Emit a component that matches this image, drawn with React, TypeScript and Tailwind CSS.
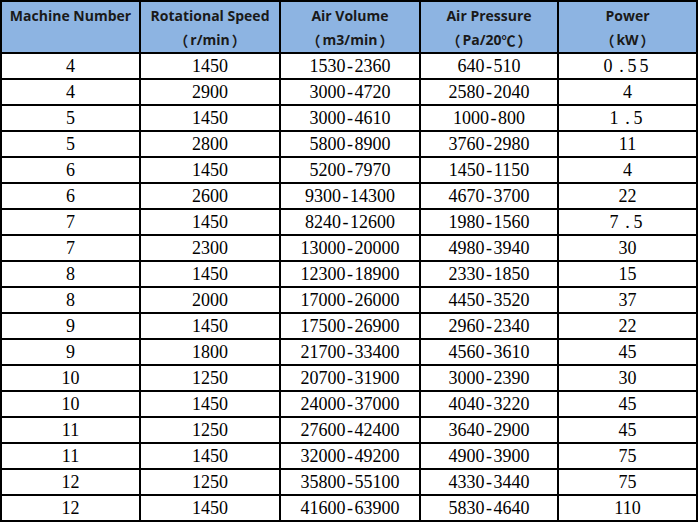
const headers: [string, string][] = [
  ['Machine Number', ''],
  ['Rotational Speed', 'r/min'],
  ['Air Volume', 'm3/min'],
  ['Air Pressure', 'Pa/20℃'],
  ['Power', 'kW'],
]

const rows: string[][] = [
  ['4', '1450', '1530-2360', '640-510', '0.55'],
  ['4', '2900', '3000-4720', '2580-2040', '4'],
  ['5', '1450', '3000-4610', '1000-800', '1.5'],
  ['5', '2800', '5800-8900', '3760-2980', '11'],
  ['6', '1450', '5200-7970', '1450-1150', '4'],
  ['6', '2600', '9300-14300', '4670-3700', '22'],
  ['7', '1450', '8240-12600', '1980-1560', '7.5'],
  ['7', '2300', '13000-20000', '4980-3940', '30'],
  ['8', '1450', '12300-18900', '2330-1850', '15'],
  ['8', '2000', '17000-26000', '4450-3520', '37'],
  ['9', '1450', '17500-26900', '2960-2340', '22'],
  ['9', '1800', '21700-33400', '4560-3610', '45'],
  ['10', '1250', '20700-31900', '3000-2390', '30'],
  ['10', '1450', '24000-37000', '4040-3220', '45'],
  ['11', '1250', '27600-42400', '3640-2900', '45'],
  ['11', '1450', '32000-49200', '4900-3900', '75'],
  ['12', '1250', '35800-55100', '4330-3440', '75'],
  ['12', '1450', '41600-63900', '5830-4640', '110'],
]

const cjk = "font-['Noto_Sans_CJK_SC',sans-serif] font-bold"

// punctuation in the source is rendered in a wide CJK face
function Num({ v }: { v: string }) {
  const dotted = v.includes('.')
  const parts = v.split(/([-.])/)
  return (
    <>
      {parts.map((p, i) =>
        p === '-' ? (
          <span key={i} className="inline-block w-[9px] text-center">
            -
          </span>
        ) : p === '.' ? (
          <span key={i} className="inline-block w-[12px] text-center">
            .
          </span>
        ) : (
          <span key={i} className={dotted ? 'tracking-[3px]' : ''}>
            {p}
          </span>
        ),
      )}
    </>
  )
}

// ℃ is a single CJK glyph in the source
function Unit({ u }: { u: string }) {
  const i = u.indexOf('℃')
  if (i < 0) return <>{u}</>
  return (
    <>
      {u.slice(0, i)}
      <span className="font-['Noto_Sans_CJK_SC',sans-serif] font-bold">℃</span>
    </>
  )
}

export default function App() {
  return (
    <div className="w-[699px] h-[523px] bg-white">
      <div className="w-[698px] border-l-2 border-t-2 border-b-2 border-r-2 border-black border-r-dotted">
        <div className="grid grid-cols-[137px_138px_138px_136px_137px] gap-[2px] bg-black">
          {headers.map(([a, b]) => (
            <div
              key={a}
              className="h-[50px] bg-[#8db4e2] flex flex-col items-center pt-[2px] text-[14px] leading-[24px] font-bold text-[#1a1a1a] font-['Open_Sans','Noto_Sans_CJK_SC',sans-serif]"
            >
              <span>{a}</span>
              {b && (
                <span className="flex items-center">
                  <span className={cjk + ' mr-[2px]'}>（</span>
                  <Unit u={b} />
                  <span className={cjk + ' ml-[2px]'}>）</span>
                </span>
              )}
            </div>
          ))}
          {rows.map((r, ri) =>
            r.map((c, ci) => (
              <div
                key={ri + '-' + ci}
                className="h-[24px] bg-white flex items-center justify-center text-[18px] leading-none text-black font-['Liberation_Serif',serif]"
              >
                <Num v={c} />
              </div>
            )),
          )}
        </div>
      </div>
    </div>
  )
}
